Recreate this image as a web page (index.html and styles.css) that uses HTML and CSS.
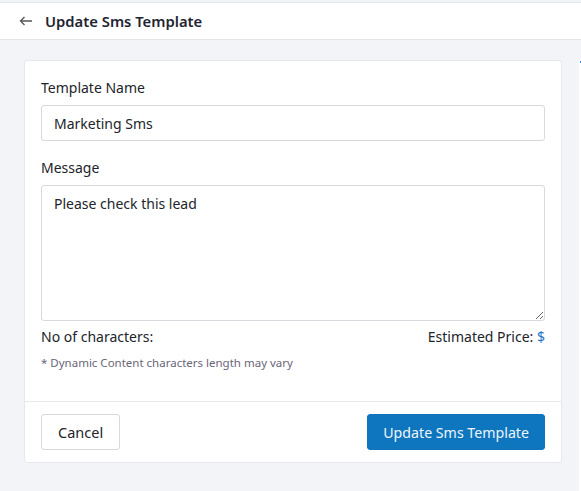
FILE: index.html
```html
<!DOCTYPE html>
<html lang="en">
  <head>
    <meta charset="utf-8" />
    <meta name="viewport" content="width=device-width, initial-scale=1.0" />
    <title>Update Sms Template</title>
    <link rel="stylesheet" href="styles.css">
  </head>

  <body>
    <header class="topbar">
      <a class="back" href="#" aria-label="Back">
        <svg width="14" height="10" viewBox="0 0 14 10">
          <path d="M13 5H1.5M5.5 1L1.5 5l4 4" fill="none" stroke="#555" stroke-width="1.3" />
        </svg>
      </a>
      <h1>Update Sms Template</h1>
    </header>

    <main class="page">
      <form class="card">
        <div class="card-body">
          <label class="field-label" for="templateName">Template Name</label>
          <input class="field" type="text" id="templateName" value="Marketing Sms" />

          <label class="field-label" for="message">Message</label>
          <textarea class="field message" id="message">Please check this lead</textarea>

          <div class="counts">
            <span>No of characters:</span>
            <span>Estimated Price: <span class="price">$</span></span>
          </div>
          <p class="hint">* Dynamic Content characters length may vary</p>
        </div>

        <div class="card-footer">
          <button type="button" class="btn btn-light">Cancel</button>
          <button type="submit" class="btn btn-primary">Update Sms Template</button>
        </div>
      </form>
      <div class="side"><span class="dot"></span></div>
    </main>
  </body>
</html>
```

FILE: styles.css
```css
body {
  margin: 0;
  background: #f3f4f8;
  color: #212529;
  font-family: "Noto Sans", "Open Sans", sans-serif;
  font-size: 14px;
}
.topbar {
  display: flex;
  align-items: center;
  height: 36px;
  margin-top: 2px;
  padding-left: 19px;
  background: #fff;
  border-top: 1px solid #e3e5e8;
  border-bottom: 1px solid #e3e5e8;
}
.back {
  display: flex;
  margin-right: 12px;
}
.topbar h1 {
  margin: 0;
  font-size: 14.8px;
  font-weight: 600;
  color: #1f2530;
}
.page {
  display: flex;
  align-items: flex-start;
  padding: 20px 0 0 24px;
}
.card {
  width: 538px;
  background: #fff;
  border: 1px solid #e6e8eb;
  border-radius: 3px;
  box-sizing: border-box;
}
.card-body {
  padding: 16px 16px 31px;
}
.field-label {
  display: block;
  margin-bottom: 7px;
  line-height: 21px;
}
.field {
  display: block;
  width: 100%;
  box-sizing: border-box;
  height: 36px;
  margin-bottom: 16px;
  padding: 0 12px;
  border: 1px solid #d6d9dd;
  border-radius: 3px;
  font: inherit;
  color: #212529;
}
.message {
  height: 136px;
  margin-bottom: 5px;
  padding-top: 8px;
  resize: vertical;
}
.counts {
  display: flex;
  justify-content: space-between;
  line-height: 21px;
}
.price {
  color: #1f72c4;
}
.hint {
  margin: 8px 0 0;
  font-size: 11.5px;
  color: #6a6678;
}
.card-footer {
  display: flex;
  justify-content: space-between;
  padding: 12px 16px;
  border-top: 1px solid #e6e8eb;
}
.btn {
  height: 36px;
  padding: 0 16px;
  border-radius: 3px;
  font: inherit;
  font-size: 14.5px;
}
.btn-light {
  background: #fff;
  border: 1px solid #d6d9dd;
  color: #212529;
}
.btn-primary {
  padding: 0 15px;
  font-size: 14.2px;
  background: #0e75bf;
  border: 1px solid #0e75bf;
  color: #eef5fb;
}
.side {
  flex: 1;
  margin-left: 17px;
  height: 440px;
  background: #fff;
  position: relative;
}
.dot {
  position: absolute;
  top: 1px;
  left: 1px;
  width: 2px;
  height: 2px;
  background: #3b8ee0;
}
```
